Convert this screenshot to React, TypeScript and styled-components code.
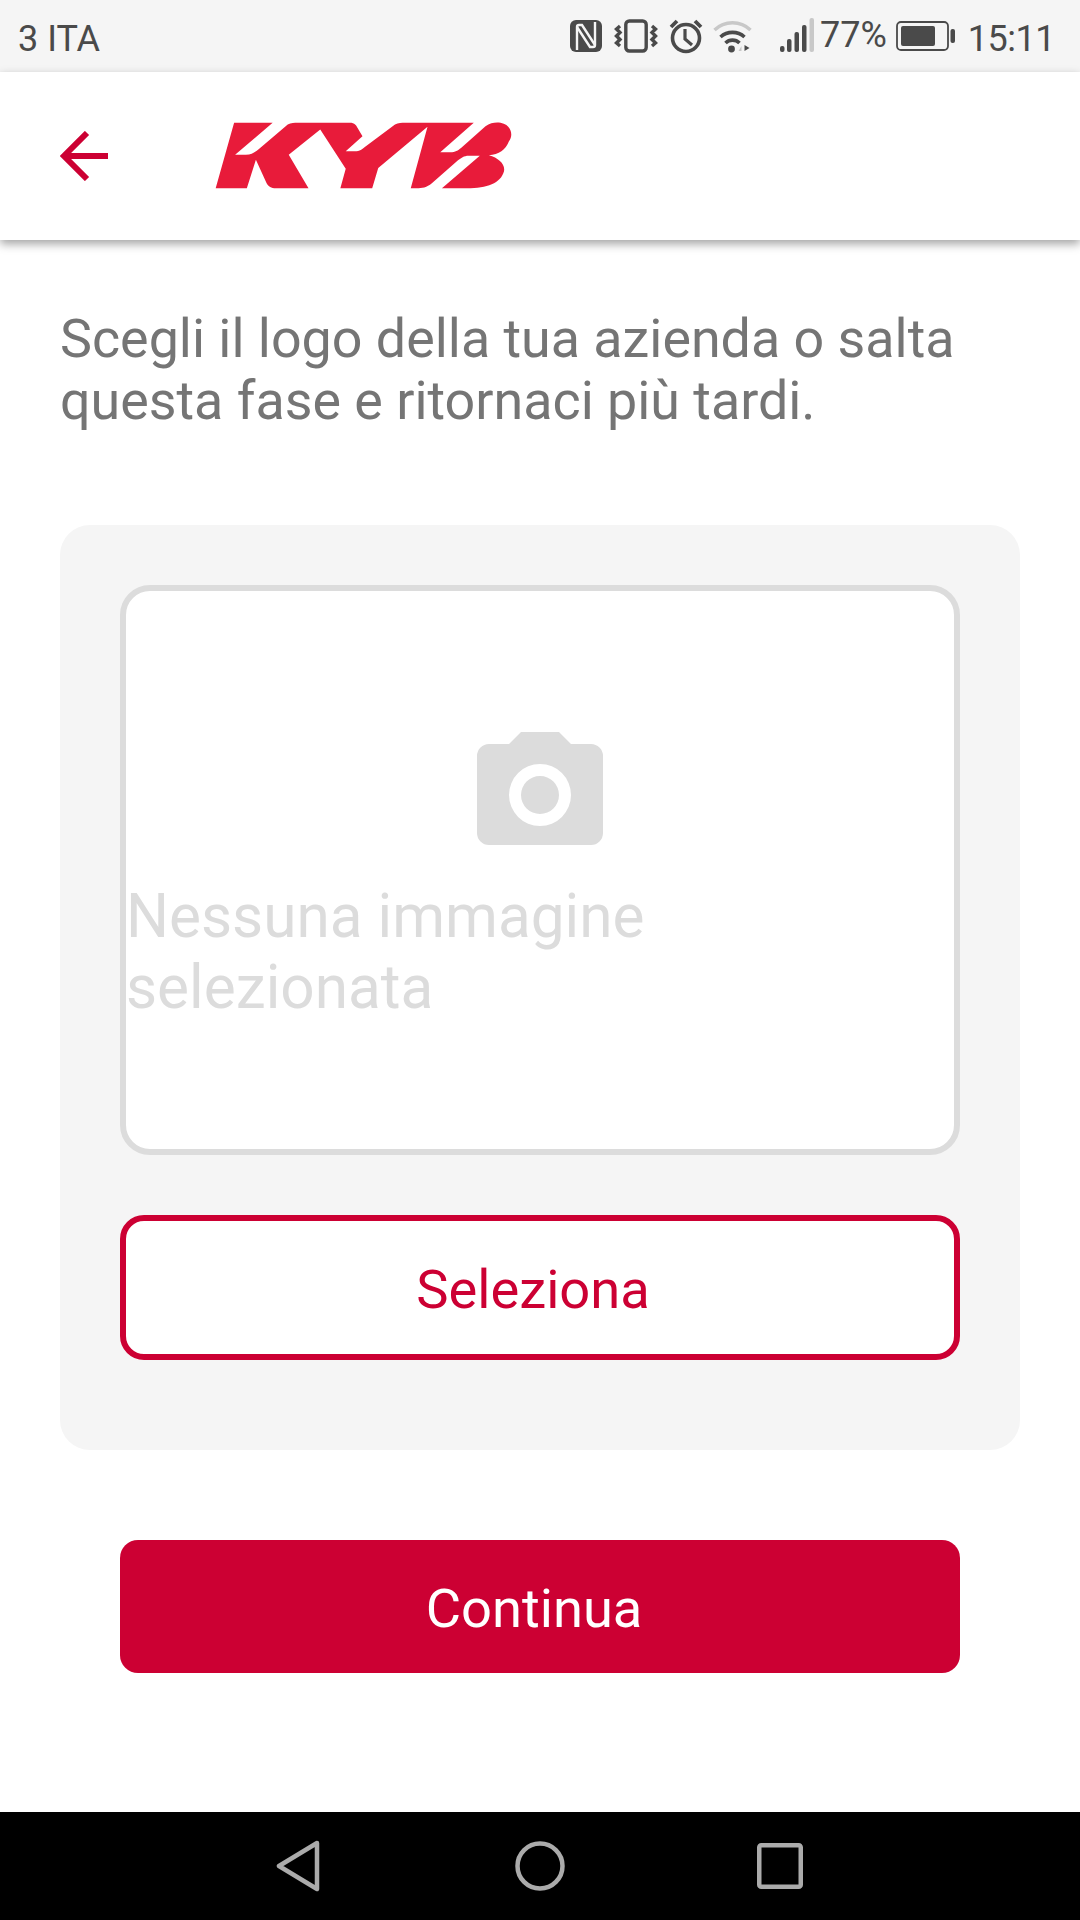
import React from "react";
import styled, { createGlobalStyle } from "styled-components";

const Global = createGlobalStyle`
  html, body { margin: 0; padding: 0; background: #fff; }
  * { box-sizing: border-box; }
`;
const Page = styled.div`
  width: 1080px; height: 1920px; display: flex; flex-direction: column;
  font-family: Roboto, "Liberation Sans", sans-serif; background: #fff; overflow: hidden;
`;
const StatusBar = styled.div`
  height: 72px; flex: none; background: #f5f5f5; color: #4a4a4a; display: flex; align-items: center;
  justify-content: space-between; padding: 0 25px 0 18px; font-size: 36px; line-height: 72px;
`;
const Carrier = styled.span`display: block; margin-top: 5px;`;
const StatusRight = styled.div`display: flex; align-items: center;`;
const StatusIcon = styled.svg<{ $gap?: number }>`
  display: block; flex: none; margin-left: ${(p) => p.$gap ?? 0}px;
`;
const Percent = styled.span`display: block; margin: -2px 0 0 6px;`;
const Clock = styled.span`display: block; margin: 5px 0 0 12px; letter-spacing: -0.5px;`;
const Header = styled.header`
  height: 168px; flex: none; background: #fff; display: flex; align-items: center; padding-left: 60px;
  box-shadow: 0 4px 9px rgba(0,0,0,0.36); position: relative;
`;
const BackIcon = styled.svg`display: block; flex: none;`;
const Logo = styled.svg`display: block; flex: none; margin: -2px 0 0 105px;`;
const Main = styled.main`flex: 1; padding: 68px 60px 0; display: flex; flex-direction: column;`;
const Intro = styled.p`
  margin: 0 0 -1px; font-size: 53.8px; line-height: 62px; color: #757575; letter-spacing: 0;
`;
const Card = styled.section`
  margin-top: 94px; background: #f5f5f5; border-radius: 30px; padding: 60px 60px 90px;
  display: flex; flex-direction: column; gap: 60px;
`;
const ImageBox = styled.div`
  height: 570px; background: #fff; border: 6px solid #dcdcdc; border-radius: 30px;
  padding: 141px 0 0; display: flex; flex-direction: column;
`;
const CameraIcon = styled.svg`display: block; align-self: center; flex: none;`;
const Placeholder = styled.div`
  width: 600px; margin: 36px 0 0 0; font-size: 60.3px; line-height: 71px; color: #dcdcdc;
`;
const OutlineButton = styled.button`
  height: 145px; background: #fff; border: 6px solid #cc0033; border-radius: 24px; color: #cc0033;
  font: 400 54.300px Roboto, sans-serif; padding: 4px 14px 0 0; display: block; width: 100%;
`;
const PrimaryButton = styled.button`
  height: 133px; margin: 90px 60px 0; background: #cc0033; border: 0; border-radius: 18px; color: #fff;
  font: 400 54.300px Roboto, sans-serif; padding: 4px 12px 0 0; display: block;
`;
const NavBar = styled.nav`
  height: 108px; flex: none; background: #000; display: flex; align-items: center;
  padding-left: 276px;
`;
const NavIcon = styled.svg<{ $gap?: number }>`display: block; flex: none; margin-left: ${(p) => p.$gap ?? 0}px;`;

const dark = "#4a4a4a";
const light = "#f5f5f5";

export default function App() {
  return (
    <Page>
      <Global />
      <StatusBar>
        <Carrier>3 ITA</Carrier>
        <StatusRight>
          <StatusIcon width="34" height="34" viewBox="0 0 34 34">
            <rect x="1" y="1" width="32" height="32" rx="6" fill={dark} />
            <path d="M8 31V8q0-2 2-2h3l13 20" fill="none" stroke={light} strokeWidth="2.400" />
            <path d="M26 3v23q0 2-2 2h-3L8 8" fill="none" stroke={light} strokeWidth="2.400" />
          </StatusIcon>
          <StatusIcon $gap={11} width="44" height="34" viewBox="0 0 44 34">
            <rect x="11.800" y="2" width="20.400" height="30" rx="3.500" fill="none" stroke={dark} strokeWidth="3.400" />
            <path d="M6 7l-3.500 3 3.500 3.500-3.500 3.500 3.500 3.500-3.500 3.500 3.500 3M38 7l3.500 3-3.500 3.500 3.500 3.500-3.500 3.500 3.500 3.500-3.500 3" fill="none" stroke={dark} strokeWidth="3.400" />
          </StatusIcon>
          <StatusIcon $gap={10} width="36" height="36" viewBox="0 0 36 36">
            <circle cx="18" cy="20" r="13.500" fill="none" stroke={dark} strokeWidth="3.600" />
            <path d="M17 11v10l7 6" fill="none" stroke={dark} strokeWidth="3.200" />
            <path d="M3 9l6-6M33 9l-6-6" stroke={dark} strokeWidth="3.800" />
          </StatusIcon>
          <StatusIcon $gap={8} width="41" height="34" viewBox="0 0 40 34">
            <path d="M2 11a26 26 0 0 1 36 0" fill="none" stroke="#c8c8c8" strokeWidth="3.400" />
            <path d="M8 18a18 18 0 0 1 24 0M13 24a10 10 0 0 1 14 0" fill="none" stroke={dark} strokeWidth="3.600" />
            <circle cx="19" cy="30" r="3.400" fill={dark} />
            <path d="M26 32l3-5v5z" fill="#c8c8c8" />
            <path d="M32 32v-6l5 3z" fill={dark} />
          </StatusIcon>
          <StatusIcon $gap={27} width="34" height="36" viewBox="0 0 34 36">
            <rect x="0" y="28" width="4.500" height="6" rx="2" fill={dark} />
            <rect x="7" y="21" width="4.500" height="13" rx="2" fill={dark} />
            <rect x="14.500" y="14" width="4.500" height="20" rx="2" fill={dark} />
            <rect x="22" y="7" width="4.500" height="27" rx="2" fill={dark} />
            <rect x="29.500" y="0" width="4.500" height="34" rx="2" fill="#c8c8c8" />
          </StatusIcon>
          <Percent>77%</Percent>
          <StatusIcon $gap={9} width="60" height="32" viewBox="0 0 60 32">
            <rect x="1" y="2" width="51" height="28" rx="4" fill="none" stroke={dark} strokeWidth="1.800" />
            <rect x="5" y="6" width="34" height="20" rx="2" fill={dark} />
            <rect x="54.500" y="9" width="4.500" height="14" rx="2" fill={dark} />
          </StatusIcon>
          <Clock>15:11</Clock>
        </StatusRight>
      </StatusBar>
      <Header>
        <BackIcon width="50" height="50" viewBox="0 0 50 50">
          <path d="M48 25H4M27 2L4 25l23 23" fill="none" stroke="#cc0033" strokeWidth="6" />
        </BackIcon>
        <Logo width="300" height="67" viewBox="78 68 895 199">
          <path
            fill="#e81b3a"
            d="M135 70H250L138 165H170C190 165 200 155 210 147L295 75C305 70 315 70 325 70H480C495 70 500 78 503 85L518 110L468 155H495C510 155 518 148 525 142L615 75C625 70 635 70 645 70H850L750 158H780C795 158 803 152 812 145L885 80C900 70 915 68 930 70C960 75 970 105 955 125C945 150 925 165 895 167C925 175 945 195 940 215C930 250 890 265 830 265H755L868 168H835C820 168 812 175 803 182L725 250C710 263 695 265 680 265H662L712 82L565 205L547 265H452L468 207L392 90L298 165L357 265H260C245 265 238 260 232 250L200 180L173 265H80Z"
          />
        </Logo>
      </Header>
      <Main>
        <Intro>
          Scegli il logo della tua azienda o salta
          <br />
          questa fase e ritornaci più tardi.
        </Intro>
        <Card>
          <ImageBox>
            <CameraIcon width="126" height="113" viewBox="0 0 126 113">
              <path
                fillRule="evenodd"
                fill="#dcdcdc"
                d="M44 0H82L94 12H114A12 12 0 0 1 126 24V101A12 12 0 0 1 114 113H12A12 12 0 0 1 0 101V24A12 12 0 0 1 12 12H32ZM63 32A31 31 0 1 0 63 94A31 31 0 1 0 63 32ZM63 44A19 19 0 1 1 63 82A19 19 0 1 1 63 44Z"
              />
            </CameraIcon>
            <Placeholder>Nessuna immagine selezionata</Placeholder>
          </ImageBox>
          <OutlineButton>Seleziona</OutlineButton>
        </Card>
        <PrimaryButton>Continua</PrimaryButton>
      </Main>
      <NavBar>
        <NavIcon width="46" height="52" viewBox="0 0 46 52">
          <path d="M41 3L3 26l38 23z" fill="none" stroke="#ababab" strokeWidth="4.500" strokeLinejoin="round" />
        </NavIcon>
        <NavIcon $gap={193} width="50" height="50" viewBox="0 0 50 50">
          <circle cx="25" cy="25" r="22.500" fill="none" stroke="#ababab" strokeWidth="4.500" />
        </NavIcon>
        <NavIcon $gap={192} width="46" height="46" viewBox="0 0 46 46">
          <rect x="2.250" y="2.250" width="41.500" height="41.500" rx="2" fill="none" stroke="#ababab" strokeWidth="4.500" />
        </NavIcon>
      </NavBar>
    </Page>
  );
}
